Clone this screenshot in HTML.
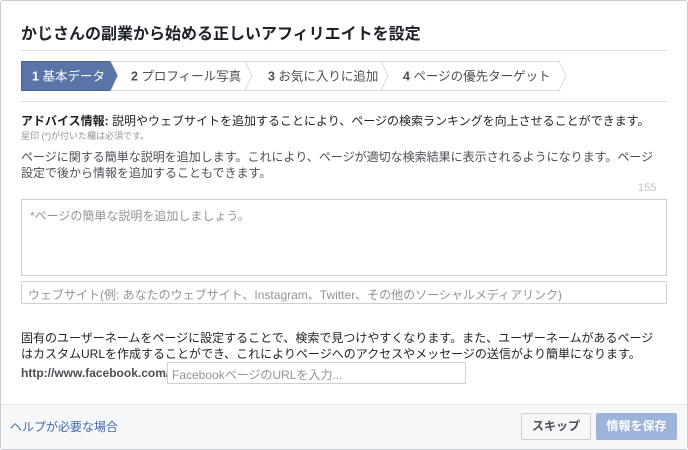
<html><head><style>
body{margin:0;width:688px;height:450px;overflow:hidden;background:#fff;font-family:"Liberation Sans","Noto Sans CJK JP",sans-serif;position:relative}
.a{position:absolute;white-space:nowrap}
.box{position:absolute;border:1px solid #ccd0d8;box-sizing:border-box;background:#fff;color:#90949c;font-size:12px}
</style></head><body>
<div class="a" style="left:0;top:0;width:686px;height:448px;border:1px solid #c9cdd2;border-radius:3px"></div>
<div class="a" style="left:21px;top:20px;font-size:16px;font-weight:bold;color:#1d2129">かじさんの副業から始める正しいアフィリエイトを設定</div>
<div class="a" style="left:21px;top:50px;width:646px;height:1px;background:#dddfe2"></div>
<svg class="a" style="left:21px;top:61px" width="560" height="30">
<path d="M0.5 0.5H90L97 14.5L90 29.5H0.5Z" fill="#5b74a8" stroke="#4b65a0"/>
<path d="M90 0.5H224L231 14.5L224 29.5H90L97 14.5Z" fill="#fff" stroke="#d7dbe6"/>
<path d="M224 0.5H360L367 14.5L360 29.5H224L231 14.5Z" fill="#fff" stroke="#d7dbe6"/>
<path d="M360 0.5H538L545 14.5L538 29.5H360L367 14.5Z" fill="#fff" stroke="#d7dbe6"/>
<text x="11" y="19.5" font-size="12.5" fill="#fff" font-weight="bold">1 <tspan font-weight="normal">基本データ</tspan></text>
<text x="110" y="19.5" font-size="12.5" fill="#4b4f56"><tspan font-weight="bold">2</tspan> プロフィール写真</text>
<text x="247" y="19.5" font-size="12.5" fill="#4b4f56"><tspan font-weight="bold">3</tspan> お気に入りに追加</text>
<text x="382" y="19.5" font-size="12.5" fill="#4b4f56"><tspan font-weight="bold">4</tspan> ページの優先ターゲット</text>
</svg>
<div class="a" style="left:21px;top:101px;width:646px;height:1px;background:#dddfe2"></div>
<div class="a" style="left:21px;top:112px;font-size:12px;color:#1d2129"><b>アドバイス情報:</b> 説明やウェブサイトを追加することにより、ページの検索ランキングを向上させることができます。</div>
<div class="a" style="left:21px;top:129px;font-size:9px;color:#90949c">星印 (*)が付いた欄は必須です。</div>
<div class="a" style="left:21px;top:149px;font-size:12px;line-height:16px;color:#4b4f56">ページに関する簡単な説明を追加します。これにより、ページが適切な検索結果に表示されるようになります。ページ<br>設定で後から情報を追加することもできます。</div>
<div class="a" style="left:638px;top:182px;font-size:11px;color:#bec3c9">155</div>
<div class="box" style="left:21px;top:199px;width:646px;height:77px;padding:7px 8px">*ページの簡単な説明を追加しましょう。</div>
<div class="box" style="left:21px;top:281px;width:646px;height:23px;padding:4px 6px">ウェブサイト(例: あなたのウェブサイト、Instagram、Twitter、その他のソーシャルメディアリンク)</div>
<div class="a" style="left:21px;top:330px;font-size:12px;line-height:16px;color:#1d2129">固有のユーザーネームをページに設定することで、検索で見つけやすくなります。また、ユーザーネームがあるページ<br>はカスタムURLを作成することができ、これによりページへのアクセスやメッセージの送信がより簡単になります。</div>
<div class="a" style="left:21px;top:366px;font-size:12px;font-weight:bold;color:#4b4f56">http://www.facebook.com/</div>
<div class="box" style="left:167px;top:362px;width:299px;height:22px;padding:3px 4px">FacebookページのURLを入力...</div>
<div class="a" style="left:1px;top:404px;width:686px;height:44px;background:#f6f7f9;border-top:1px solid #e5e5e5"></div>
<div class="a" style="left:10px;top:418px;font-size:12px;color:#4267b2">ヘルプが必要な場合</div>
<div class="a" style="left:521px;top:413px;width:70px;height:27px;box-sizing:border-box;border:1px solid #ced0d4;background:#f6f7f9;border-radius:2px;font-size:12px;font-weight:bold;color:#4b4f56;text-align:center;line-height:25px">スキップ</div>
<div class="a" style="left:596px;top:413px;width:81px;height:27px;background:#9cb4d8;border-radius:2px;font-size:12px;font-weight:bold;color:#fff;text-align:center;line-height:27px">情報を保存</div>
</body></html>
